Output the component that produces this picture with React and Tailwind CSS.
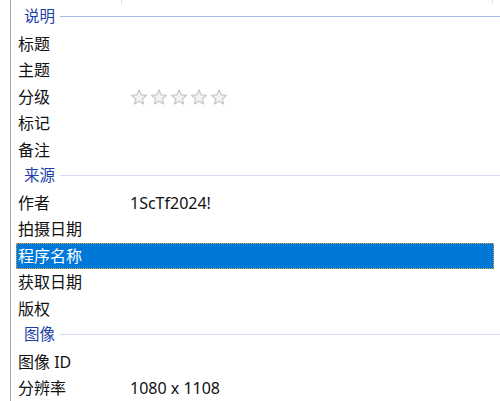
import { Fragment } from 'react';

const font = { fontFamily: '"Noto Sans", "Noto Sans CJK SC", sans-serif' };

const sections = [
  {
    title: '说明',
    active: true,
    rows: [
      { label: '标题' },
      { label: '主题' },
      { label: '分级', stars: true },
      { label: '标记' },
      { label: '备注' },
    ],
  },
  {
    title: '来源',
    rows: [
      { label: '作者', value: '1ScTf2024!' },
      { label: '拍摄日期' },
      { label: '程序名称', selected: true },
      { label: '获取日期' },
      { label: '版权' },
    ],
  },
  {
    title: '图像',
    rows: [
      { label: '图像 ID' },
      { label: '分辨率', value: '1080 x 1108' },
    ],
  },
];

const Star = () => (
  <svg width="18" height="18" viewBox="0 0 24 24">
    <path
      d="M12 2.5l2.8 6.6 7.1.6-5.4 4.7 1.6 7-6.1-3.7-6.1 3.7 1.6-7-5.4-4.7 7.1-.6z"
      fill="#f4f4f4"
      stroke="#c4c4c4"
      strokeWidth="1.5"
      strokeLinejoin="round"
    />
  </svg>
);

const App = () => {
  return (
    <div className="w-[500px] h-[401px] overflow-hidden bg-white" style={font}>
      <div className="ml-[10px] h-full border-l border-[#a3a3b3]">
        {/* column header remnant */}
        <div className="flex h-[4px]">
          <div className="w-[111px] border-r border-[#e2e2e2]" />
          <div className="w-[371px] border-r border-[#e2e2e2]" />
        </div>

        {sections.map((section) => (
          <Fragment key={section.title}>
            <div className="flex items-center h-[26.5px] pl-[13px]">
              <span className="text-[15.5px] text-[#1d3fa6] leading-none -mt-[1px]">{section.title}</span>
              <div
                className={`flex-1 ml-[5px] -mt-[2px] h-px ${section.active ? 'bg-[#a9bce9]' : 'bg-[#d5ddf0]'}`}
              />
            </div>
            {section.rows.map((row) => (
              <div
                key={row.label}
                className={`flex items-center h-[26.5px] ml-[5px] w-[478px] text-[16px] leading-none ${
                  row.selected
                    ? 'bg-[#0078d7] text-white outline-1 outline-dotted outline-[#f0a040] -outline-offset-1'
                    : 'text-[#111]'
                }`}
              >
                <div className="w-[114px] pl-[2px]">{row.label}</div>
                <div className="flex items-center">
                  {row.stars && (
                    <div className="flex gap-[2px] mt-[1px]">
                      {[0, 1, 2, 3, 4].map((i) => (
                        <Star key={i} />
                      ))}
                    </div>
                  )}
                  {row.value && <span>{row.value}</span>}
                </div>
              </div>
            ))}
          </Fragment>
        ))}
      </div>
    </div>
  );
};

export default App;
